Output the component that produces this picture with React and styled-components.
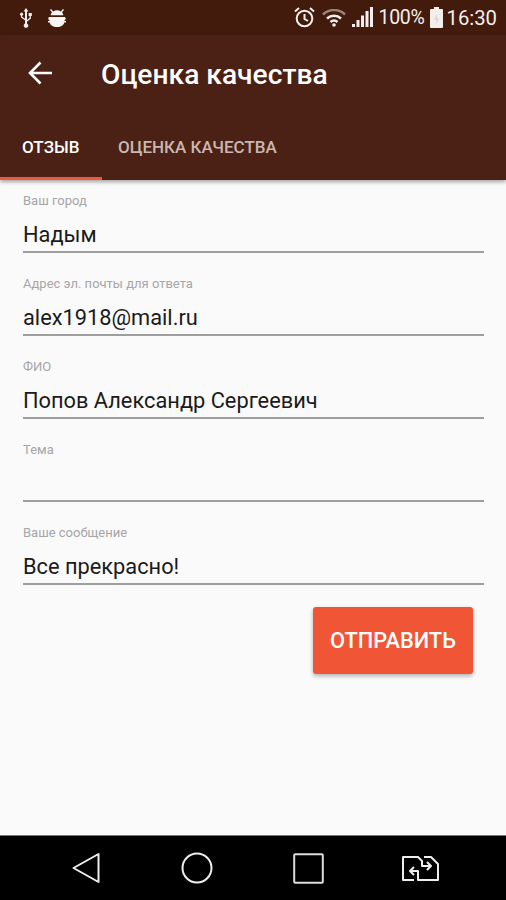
import React from 'react'
import styled, { createGlobalStyle } from 'styled-components'

const fields = [
  { label: 'Ваш город', value: 'Надым' },
  { label: 'Адрес эл. почты для ответа', value: 'alex1918@mail.ru' },
  { label: 'ФИО', value: 'Попов Александр Сергеевич' },
  { label: 'Тема', value: '' },
  { label: 'Ваше сообщение', value: 'Все прекрасно!' },
]

function App() {
  return (
    <Screen>
      <GlobalStyle />
      <StatusBar>
        <StatusLeft>
          <svg width="14" height="20" viewBox="0 0 14 20" fill="#f4efec">
            <path d="M7 0l2.4 3.4H8V12l2.6-2.2V8H9.600V5h3.200v3h-.9v2.400L8 13.800v1.600a2.300 2.300 0 1 1-2 0v-3.200L2 9.400V7.600A1.500 1.500 0 1 1 3.200 7.600v1.200L6 10.800V3.400H4.600z" />
          </svg>
          <svg width="20" height="20" viewBox="0 0 20 20" fill="#f8f6f4">
            <path d="M4 1l2.200 2.400a7 7 0 0 1 7.600 0L16 1l1 1-2 2.300c.7.8 1.200 1.800 1.300 2.900H3.700c.1-1.100.6-2.100 1.300-2.900L3 2zM2 9h16a2 2 0 0 1 0 3h-.4v1H19v1.500h-1.800C17 17 14 19 10 19s-7-2-7.200-4.500H1V13h1.400v-1H2a2 2 0 0 1 0-3z" />
          </svg>
        </StatusLeft>
        <StatusRight>
          <svg width="23" height="23" viewBox="0 0 23 23" fill="none" stroke="#f4efec" strokeWidth="2">
            <circle cx="11.500" cy="12.500" r="7.800" />
            <path d="M11.500 8v5l3.500 2M2 5.500L6 2M21 5.500L17 2" />
          </svg>
          <svg width="24" height="18" viewBox="0 0 24 18" fill="none">
            <path d="M1 5.500a16 16 0 0 1 22 0" stroke="#9a8378" strokeWidth="2.500" />
            <path d="M5 9.500a10.500 10.500 0 0 1 14 0" stroke="#f4efec" strokeWidth="2.500" />
            <path d="M8.500 13a5.500 5.500 0 0 1 7 0" stroke="#f4efec" strokeWidth="2.500" />
            <circle cx="12" cy="16" r="1.800" fill="#f4efec" />
          </svg>
          <svg width="21" height="21" viewBox="0 0 21 21" fill="#f4efec">
            <path d="M0 17h3v3H0zM4.500 13h3v7h-3zM9 8.500h3V20H9zM13.500 4h3v16h-3zM18 0h3v20h-3z" />
          </svg>
          <Percent>100%</Percent>
          <svg width="13" height="21" viewBox="0 0 13 21" fill="#f2eeeb">
            <path d="M4 0h5v2h3a1 1 0 0 1 1 1v17a1 1 0 0 1-1 1H1a1 1 0 0 1-1-1V3a1 1 0 0 1 1-1h3z" />
            <path d="M7.500 7L4 12.500h2.500L5.500 17 9 11.500H6.500z" fill="#d9d2cd" />
          </svg>
          <Clock>16:30</Clock>
        </StatusRight>
      </StatusBar>

      <Header>
        <TitleRow>
          <BackIcon width="24" height="24" viewBox="0 0 24 24" fill="none" stroke="#fff" strokeWidth="2.600">
            <path d="M24 12H3M12.500 1.500L2 12l10.500 10.500" />
          </BackIcon>
          <Title>Оценка качества</Title>
        </TitleRow>
        <Tabs>
          <Tab $active>ОТЗЫВ</Tab>
          <Tab>ОЦЕНКА КАЧЕСТВА</Tab>
        </Tabs>
      </Header>

      <Form>
        {fields.map((f) => (
          <Field key={f.label}>
            <Label>{f.label}</Label>
            <Value>{f.value}</Value>
          </Field>
        ))}
        <Actions>
          <SendButton>ОТПРАВИТЬ</SendButton>
        </Actions>
      </Form>

      <NavBar>
        <svg width="28" height="32" viewBox="0 0 28 32" fill="none" stroke="#eee" strokeWidth="2" strokeLinejoin="round">
          <path d="M26.500 2v28L1.500 16z" />
        </svg>
        <svg width="32" height="32" viewBox="0 0 32 32" fill="none" stroke="#eee" strokeWidth="2">
          <circle cx="16" cy="16" r="14.500" />
        </svg>
        <svg width="31" height="31" viewBox="0 0 31 31" fill="none" stroke="#ddd" strokeWidth="2" strokeLinejoin="round">
          <rect x="1.200" y="1.200" width="28.600" height="28.600" rx="1" />
        </svg>
        <svg width="38" height="27" viewBox="0 0 38 27" fill="none" stroke="#eee" strokeWidth="2" strokeLinejoin="round">
          <path d="M13 25H2V2h15l4 4v5h9M26 7l4 4-4 4" />
          <path d="M23 2h7l7 7v16H17v-9H9M13 12l-4 4 4 4" />
        </svg>
      </NavBar>
    </Screen>
  )
}
export default App;

const GlobalStyle = createGlobalStyle`
    html, body {
        margin: 0;
        padding: 0;
        background: #fafafa;
    }
`;

const Screen = styled.div`
    width: 506px;
    height: 900px;
    overflow: hidden;
    display: flex;
    flex-direction: column;
    font-family: Roboto, "Noto Sans", sans-serif;
    background: #fafafa;
`;

const StatusBar = styled.div`
    height: 35px;
    flex: none;
    display: flex;
    align-items: center;
    justify-content: space-between;
    padding: 0 9px 0 19px;
    background: #421b0d;
`;

const StatusLeft = styled.div`
    display: flex;
    align-items: center;
    gap: 14px;
`;

const StatusRight = styled.div`
    display: flex;
    align-items: center;
    gap: 6px;
    color: #f4efec;
`;

const Percent = styled.span`
    font-size: 19.500px;
    letter-spacing: -0.3px;
`;

const Clock = styled.span`
    font-size: 20.300px;
    margin-left: -3px;
`;

const Header = styled.div`
    height: 145px;
    flex: none;
    display: flex;
    flex-direction: column;
    justify-content: space-between;
    background: #4b2115;
    box-shadow: 0 2px 4px rgba(0, 0, 0, 0.35);
    z-index: 1;
`;

const TitleRow = styled.div`
    display: flex;
    align-items: center;
    gap: 49px;
    padding: 23px 0 0 28px;
`;

const BackIcon = styled.svg`
    margin-top: -3px;
`;

const Title = styled.div`
    color: #fff;
    font-size: 28.200px;
    font-weight: 500;
`;

const Tabs = styled.div`
    display: flex;
`;

const Tab = styled.div`
    height: 57px;
    min-width: ${(p) => (p.$active ? '102px' : '0')};
    box-sizing: border-box;
    padding: 14px 22px 0;
    margin-right: -6px;
    font-size: 17px;
    font-weight: 500;
    color: ${(p) => (p.$active ? '#fff' : '#c9b8b2')};
    border-bottom: 3px solid ${(p) => (p.$active ? '#f1583a' : 'transparent')};
`;

const Form = styled.div`
    flex: 1;
    display: flex;
    flex-direction: column;
    padding: 13px 22px 0 23px;
`;

const Field = styled.div`
    height: 83px;
    flex: none;
`;

const Label = styled.div`
    height: 16px;
    font-size: 13px;
    line-height: 16px;
    color: #a6a6a6;
`;

const Value = styled.div`
    height: 44px;
    box-sizing: border-box;
    padding-top: 13px;
    font-size: 21.800px;
    line-height: 26px;
    color: #1b1b1b;
    border-bottom: 2px solid #9e9e9e;
`;

const Actions = styled.div`
    display: flex;
    justify-content: flex-end;
    padding: 0 11px 0 0;
    margin-top: -1px;
`;

const SendButton = styled.button`
    width: 160px;
    height: 67px;
    border: 0;
    padding: 0;
    border-radius: 3px;
    background: #f05535;
    color: #fff;
    font-family: inherit;
    font-size: 21.800px;
    font-weight: 500;
    box-shadow: 0 2px 4px rgba(0, 0, 0, 0.3);
`;

const NavBar = styled.div`
    height: 65px;
    flex: none;
    display: grid;
    grid-template-columns: repeat(4, 111.300px);
    justify-items: center;
    align-items: center;
    box-sizing: border-box;
    padding-left: 30px;
    background: #000;
    border-top: 1px solid #777;
`;
